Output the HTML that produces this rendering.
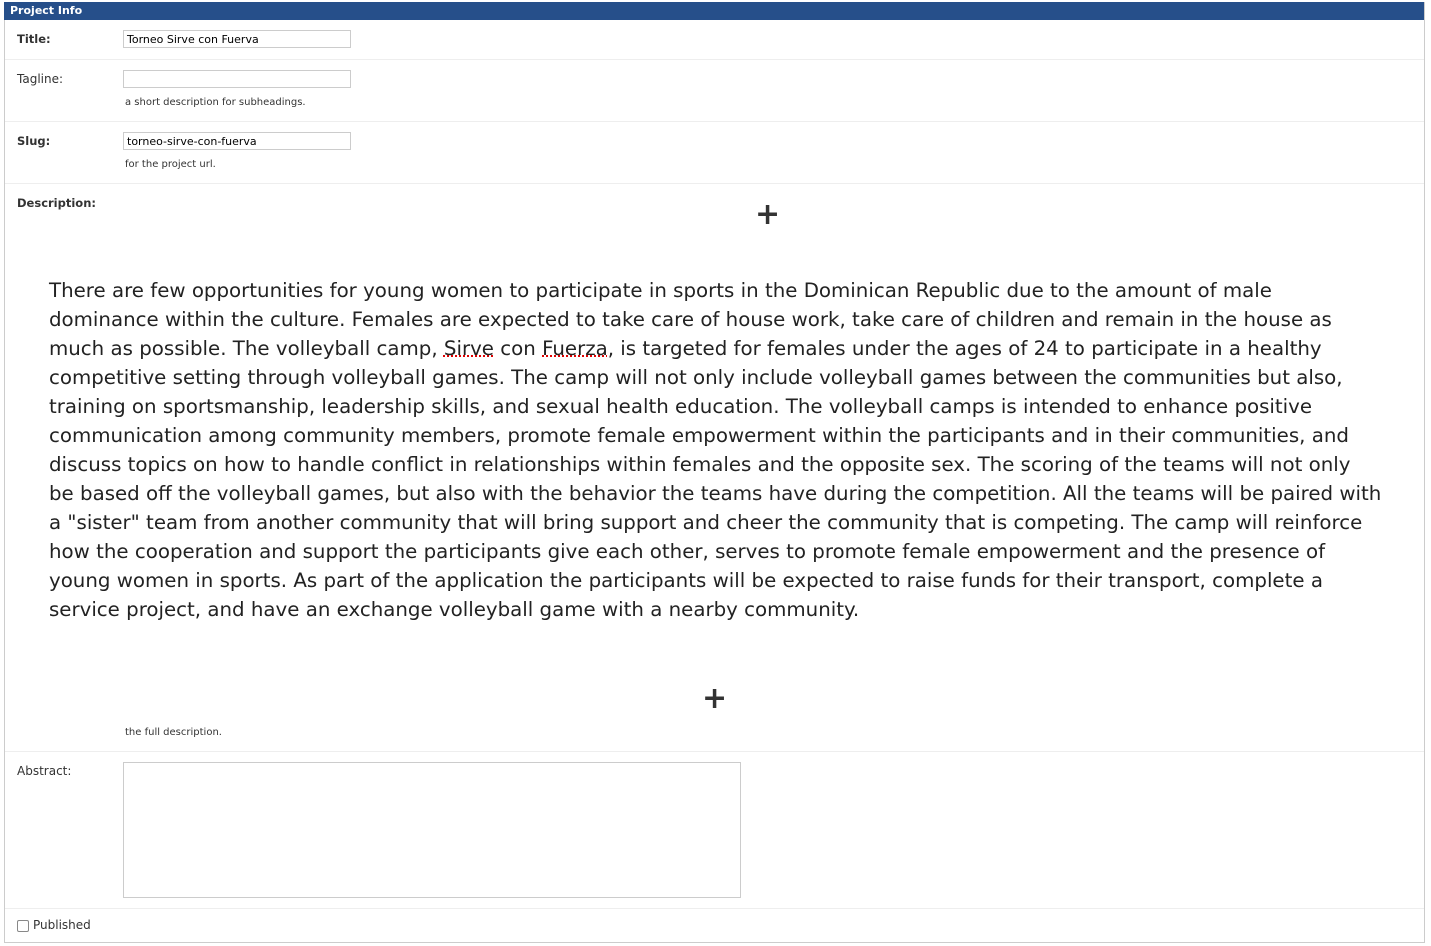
<!DOCTYPE html>
<html><head><meta charset="utf-8"><style>
body{margin:0;width:1431px;height:946px;background:#fff;font-family:"DejaVu Sans","Liberation Sans",sans-serif;color:#333;position:relative;overflow:hidden}
.box{position:absolute;left:4px;top:2px;width:1419px;height:940px;border:1px solid #ccc;border-top:none}
.hdr{position:absolute;left:4px;top:2px;width:1420px;height:18px;background:#264f8a;color:#fff;font-weight:bold;font-size:11px;line-height:18px;padding-left:6px;box-sizing:border-box}
.a{position:absolute}
.lbl{font-size:11.5px;font-weight:bold;color:#333}
.lbln{font-size:12px;color:#333}
.inp{position:absolute;border:1px solid #ccc;height:18px;box-sizing:border-box;font-size:11px;line-height:18px;padding-left:3px;color:#000}
.help{position:absolute;font-size:10px;color:#333}
.hr{position:absolute;left:5px;width:1419px;height:1px;background:#eee}
.d{position:absolute;left:49px;font-size:19.8px;white-space:nowrap;color:#222}
.plus{position:absolute;font-size:30px;font-weight:bold;color:#333;line-height:30px}
u{text-decoration:underline dotted #d00}
</style></head><body>
<div class="box"></div>
<div class="hdr">Project Info</div>
<div class="a lbl" style="left:17px;top:32px">Title:</div>
<div class="inp" style="left:123px;top:30px;width:228px">Torneo Sirve con Fuerva</div>
<div class="hr" style="top:59px"></div>
<div class="a lbln" style="left:17px;top:72px">Tagline:</div>
<div class="inp" style="left:123px;top:70px;width:228px"></div>
<div class="help" style="left:125px;top:97px">a short description for subheadings.</div>
<div class="hr" style="top:121px"></div>
<div class="a lbl" style="left:17px;top:134px">Slug:</div>
<div class="inp" style="left:123px;top:132px;width:228px">torneo-sirve-con-fuerva</div>
<div class="help" style="left:125px;top:159px">for the project url.</div>
<div class="hr" style="top:183px"></div>
<div class="a lbl" style="left:17px;top:196px">Description:</div>
<div class="plus" style="left:755px;top:200px">+</div>
<div class="d" style="top:279px">There are few opportunities for young women to participate in sports in the Dominican Republic due to the amount of male</div>
<div class="d" style="top:308px">dominance within the culture. Females are expected to take care of house work, take care of children and remain in the house as</div>
<div class="d" style="top:337px">much as possible. The volleyball camp, <u>Sirve</u> con <u>Fuerza</u>, is targeted for females under the ages of 24 to participate in a healthy</div>
<div class="d" style="top:366px">competitive setting through volleyball games. The camp will not only include volleyball games between the communities but also,</div>
<div class="d" style="top:395px">training on sportsmanship, leadership skills, and sexual health education. The volleyball camps is intended to enhance positive</div>
<div class="d" style="top:424px">communication among community members, promote female empowerment within the participants and in their communities, and</div>
<div class="d" style="top:453px">discuss topics on how to handle conflict in relationships within females and the opposite sex. The scoring of the teams will not only</div>
<div class="d" style="top:482px">be based off the volleyball games, but also with the behavior the teams have during the competition. All the teams will be paired with</div>
<div class="d" style="top:511px">a "sister" team from another community that will bring support and cheer the community that is competing. The camp will reinforce</div>
<div class="d" style="top:540px">how the cooperation and support the participants give each other, serves to promote female empowerment and the presence of</div>
<div class="d" style="top:569px">young women in sports. As part of the application the participants will be expected to raise funds for their transport, complete a</div>
<div class="d" style="top:598px">service project, and have an exchange volleyball game with a nearby community.</div>
<div class="plus" style="left:702px;top:684px">+</div>
<div class="help" style="left:125px;top:727px">the full description.</div>
<div class="hr" style="top:751px"></div>
<div class="a lbln" style="left:17px;top:764px">Abstract:</div>
<div class="a" style="left:123px;top:762px;width:618px;height:136px;border:1px solid #ccc;box-sizing:border-box"></div>
<div class="hr" style="top:908px"></div>
<div class="a" style="left:17px;top:920px;width:10px;height:10px;border:1px solid #888;border-radius:2px"></div>
<div class="a lbln" style="left:33px;top:918px">Published</div>
</body></html>
